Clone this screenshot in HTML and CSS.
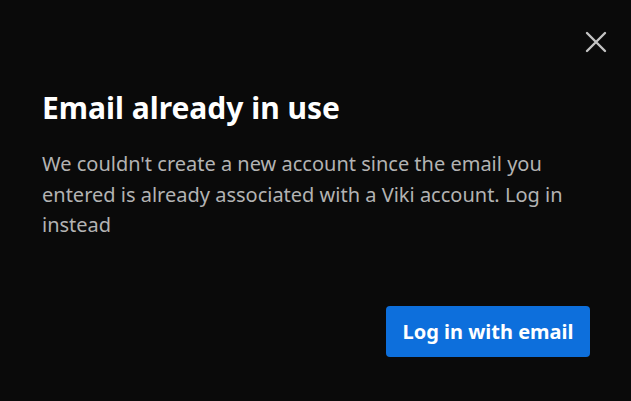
FILE: index.html
```html
<!DOCTYPE html>
<html lang="en">
<head>
    <meta charset="UTF-8">
    <meta name="viewport" content="width=device-width, initial-scale=1.0">
    <title>Email already in use</title>
    <link rel="stylesheet" href="styles.css">
</head>
<body>
    <div class="modal">
        <button class="close" type="button" aria-label="Close">
            <svg width="22" height="22" viewBox="0 0 22 22">
                <path d="M2 2 L20 20 M20 2 L2 20" stroke="#c4c4c4" stroke-width="2.4" stroke-linecap="round"/>
            </svg>
        </button>

        <h2 class="title">Email already in use</h2>
        <p class="text">We couldn't create a new account since the email you entered is already associated with a Viki account. Log in instead</p>

        <div class="actions">
            <button class="btn" type="button">Log in with email</button>
        </div>
    </div>
</body>
</html>
```

FILE: styles.css
```css
/* Page */
body {
    margin: 0;
    background-color: #0a0a0a;
    font-family: "Noto Sans", "Open Sans", sans-serif;
}

/* Dialog */
.modal {
    position: relative;
    box-sizing: border-box;
    width: 631px;
    height: 401px;
    padding: 88px 41px 0 42px;
}

.close {
    position: absolute;
    top: 31px;
    right: 24px;
    padding: 0;
    border: none;
    background: none;
    cursor: pointer;
    display: flex;
}

.title {
    margin: 0;
    color: #ffffff;
    font-size: 30px;
    font-weight: 700;
    line-height: 40px;
}

.text {
    margin: 21px 0 0 0;
    color: #b3b3b3;
    font-size: 20px;
    line-height: 30.5px;
}

/* Buttons */
.actions {
    display: flex;
    justify-content: flex-end;
    margin-top: 65px;
}

.btn {
    background-color: #0d6fdc;
    color: #ffffff;
    border: none;
    border-radius: 4px;
    padding: 0 16.5px;
    height: 51px;
    font-family: inherit;
    font-size: 20px;
    font-weight: 700;
    cursor: pointer;
}
```
